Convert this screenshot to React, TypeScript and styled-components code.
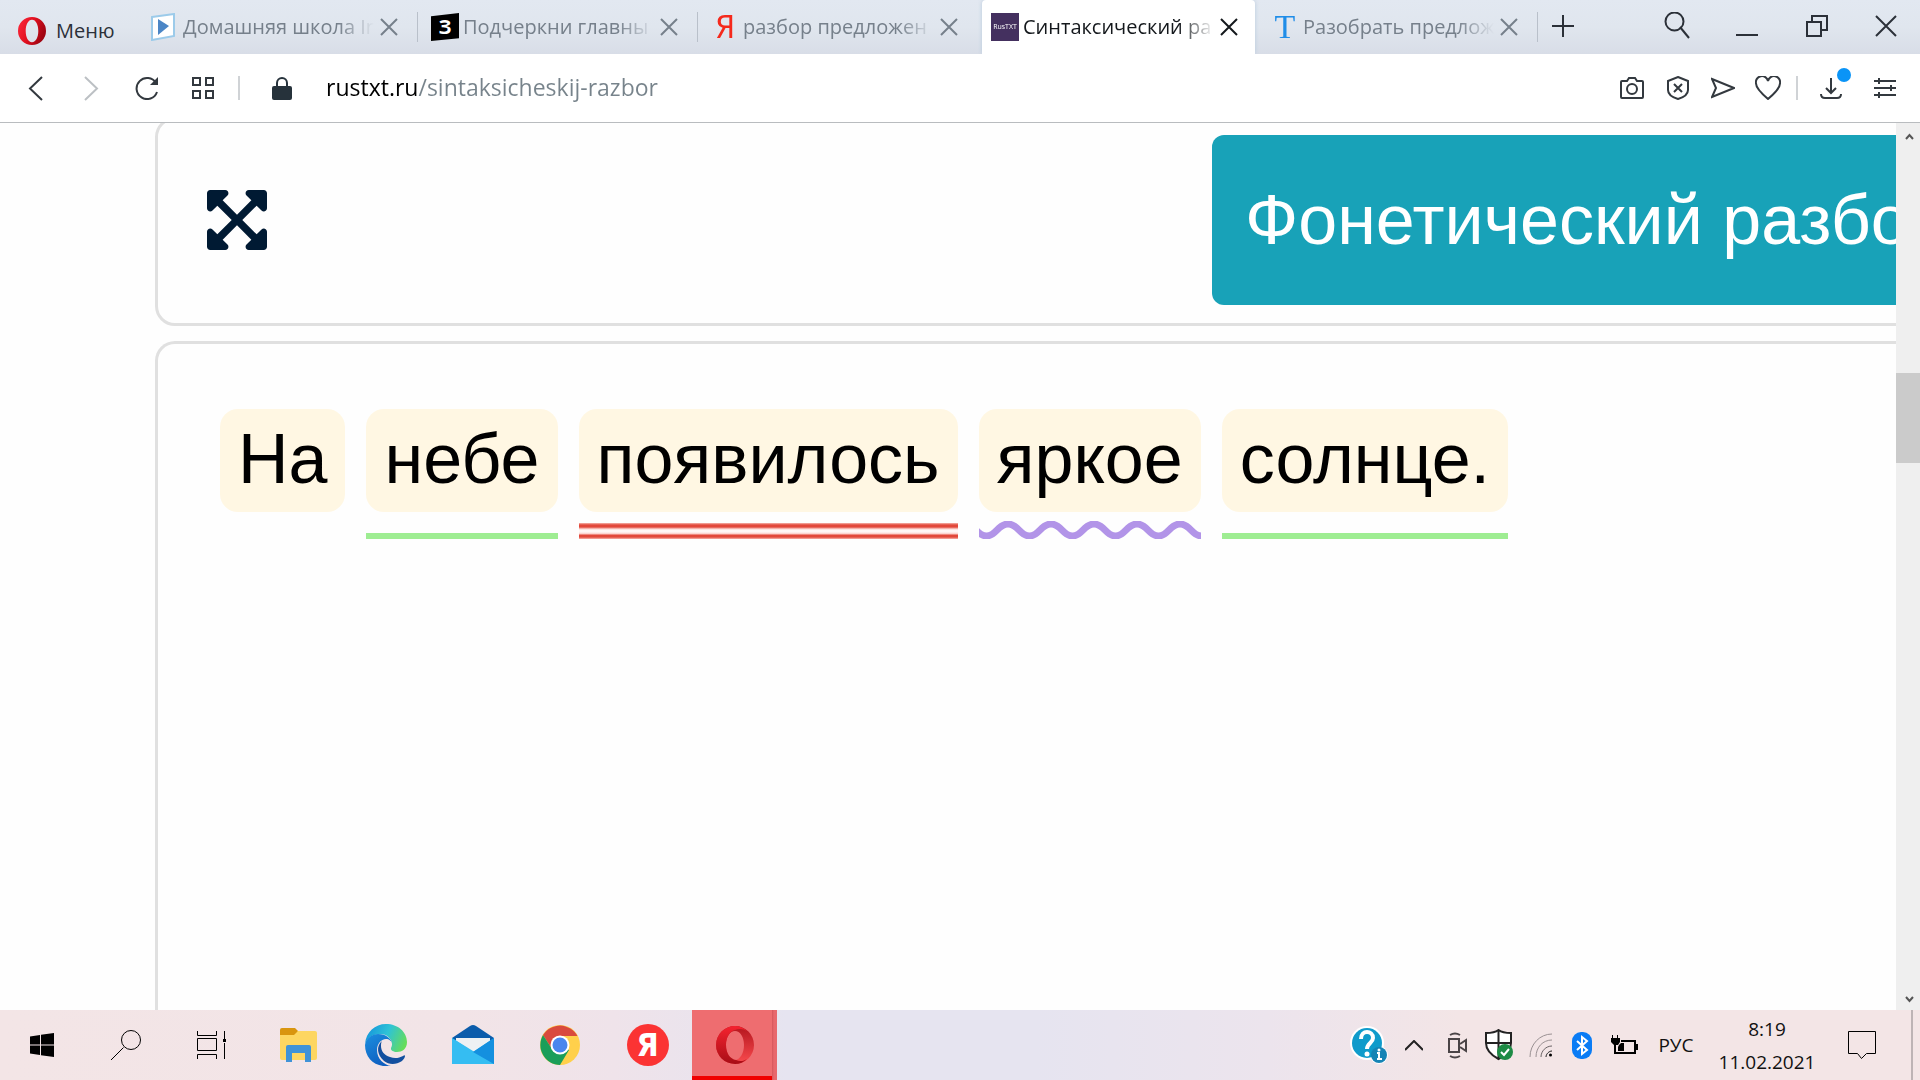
import React from "react";
import styled, { createGlobalStyle, css } from "styled-components";

const ui = `"Open Sans", "Noto Sans", sans-serif`;
const arial = `"Liberation Sans", Arial, sans-serif`;

const Global = createGlobalStyle`
  *, *::before, *::after { box-sizing: border-box; }
  body { margin: 0; background: #fff; font-family: ${ui}; overflow: hidden; }
  button, input { font: inherit; color: inherit; border: 0; background: none; padding: 0; margin: 0; }
  svg { display: block; flex: none; }
`;

const Screen = styled.div`
  height: 100vh;
  display: flex;
  flex-direction: column;
`;

/* ---------- tab strip ---------- */

const TabStrip = styled.header`
  flex: none;
  height: 54px;
  display: flex;
  background: linear-gradient(#e2e8f1, #e0e6ee 50%, #d8dde7);
  color: #2b3038;
`;

const MenuButton = styled.button`
  width: 137px;
  padding: 8px 0 0 18px;
  display: flex;
  align-items: center;
  gap: 10px;
  font-size: 20px;
  line-height: 28px;
`;

const TabList = styled.div`
  display: flex;
  min-width: 0;
`;

const Tab = styled.div<{ $active?: boolean; $line?: boolean }>`
  position: relative;
  width: 280px;
  padding: 0 13px 0 14px;
  display: flex;
  align-items: center;
  color: #76808b;
  ${(p) =>
    p.$line &&
    css`
      &::after {
        content: "";
        position: absolute;
        right: -1px;
        top: 12px;
        bottom: 12px;
        width: 1px;
        background: #b9c0ca;
      }
    `}
  ${(p) =>
    p.$active &&
    css`
      width: 273px;
      margin: 0 2px 0 5px;
      padding: 0 11px 0 9px;
      border-radius: 4px 4px 0 0;
      background: #fff;
      color: #14181c;
      box-shadow: 0 0 4px #b9cbdd;
      clip-path: inset(0 -4px 0 -4px);
    `}
`;

const TabTitle = styled.button`
  flex: 1;
  min-width: 0;
  height: 100%;
  display: flex;
  align-items: center;
  gap: 4px;
  overflow: hidden;
  color: inherit;
  font-size: 20px;
  line-height: 28px;
  white-space: nowrap;
  mask-image: linear-gradient(90deg, #000 calc(100% - 36px), transparent);
`;

const CloseButton = styled.button`
  flex: none;
  width: 30px;
  height: 30px;
  display: grid;
  place-items: center;
`;

const Favicon = styled.span<{ $bg?: string; $fg?: string; $size: number; $font?: string; $cut?: boolean }>`
  flex: none;
  width: 28px;
  height: 28px;
  display: grid;
  place-items: center;
  background: ${(p) => p.$bg || "transparent"};
  color: ${(p) => p.$fg || "#fff"};
  font-family: ${(p) => p.$font || ui};
  font-size: ${(p) => p.$size}px;
  line-height: 28px;
  clip-path: ${(p) => (p.$cut ? "polygon(0 12%, 100% 0, 100% 90%, 0 100%)" : "none")};
`;

const WindowTools = styled.div`
  flex: 1;
  display: flex;
  align-items: center;
  padding: 0 0 2px 11px;
`;

const ToolButton = styled.button<{ $w: number; $push?: boolean }>`
  width: ${(p) => p.$w}px;
  height: 40px;
  display: grid;
  place-items: center;
  margin-left: ${(p) => (p.$push ? "auto" : "0")};
`;

/* ---------- address bar ---------- */

const AddressBar = styled.nav`
  flex: none;
  height: 69px;
  display: flex;
  align-items: center;
  padding: 0 10px 0 12px;
  border-bottom: 1px solid #b9bcbf;
  background: #fff;
  color: #33393f;
`;

const Divider = styled.span<{ $gap: number }>`
  width: 2px;
  height: 24px;
  margin: 0 ${(p) => p.$gap}px;
  background: #d0d3d6;
`;

const Address = styled.input`
  && {
    flex: 1;
    min-width: 0;
    margin-left: 5px;
    height: 40px;
    padding-bottom: 2px;
    font-size: 23px;
    line-height: 32px;
    color: #77838b;
    outline: 0;
    background: linear-gradient(90deg, #000 91px, #77838b 91px);
    background-clip: text;
    -webkit-background-clip: text;
    -webkit-text-fill-color: transparent;
  }
`;

/* ---------- page ---------- */

const Viewport = styled.div`
  flex: 1;
  min-height: 0;
  display: flex;
`;

const Page = styled.main`
  flex: 1;
  min-width: 0;
  overflow: hidden;
  display: flex;
  flex-direction: column;
  padding-left: 155px;
  background: #fefefe;
  font-family: ${arial};
`;

const Card = styled.section<{ $grow?: boolean }>`
  flex: ${(p) => (p.$grow ? "1" : "none")};
  width: calc(100% + 140px);
  border: 3px solid #e0e0e0;
  border-radius: 20px;
`;

const ActionCard = styled(Card)`
  margin: -6px 0 15px;
  display: flex;
  align-items: center;
  justify-content: space-between;
  gap: 48px;
  padding: 15px 40px 18px 49px;
`;

const PhoneticButton = styled.button`
  flex: none;
  width: 781px;
  padding: 45px 33px;
  border-radius: 12px;
  background: #18a2b8;
  color: #fff;
  font-size: 70px;
  line-height: 80px;
  text-align: left;
  white-space: nowrap;
`;

const SentenceCard = styled(Card)`
  padding: 65px 62px 0;
  border-bottom: 0;
  border-radius: 20px 20px 0 0;
`;

const Sentence = styled.div`
  display: flex;
  gap: 21px;
`;

const Word = styled.div`
  display: flex;
  flex-direction: column;
  gap: 9px;
`;

const WordChip = styled.button`
  padding: 0 18px 3px;
  border-radius: 18px;
  background: #fff7e3;
  color: #000;
  font-size: 70px;
  line-height: 100px;
`;

type Role = "none" | "subject" | "predicate" | "attribute";

const Underline = styled.span<{ $role: Role }>`
  height: 18px;
  overflow: hidden;
  ${(p) => p.$role === "subject" && css`border-bottom: 6px solid #9eed92;`}
  ${(p) =>
    p.$role === "predicate" &&
    css`
      background: linear-gradient(
        transparent 2px, #f5b5ac 2px, #e2483a 4px, #e2483a 6px, #fbd5d0 8px,
        #fff6f5 9px, #fff6f5 11px, #fbc9c3 13px, #e2483a 14px, #e2483a 16px, #f5b5ac 18px
      );
    `}
`;

const WaveLine = styled.svg`
  width: 0;
  min-width: 100%;
  height: 18px;
`;

/* ---------- scrollbar ---------- */

const Scrollbar = styled.div`
  flex: none;
  width: 24px;
  display: grid;
  grid-template-rows: 26px 224px 90px 1fr 22px;
  justify-items: center;
  align-items: center;
  background: #efefef;
`;

const Thumb = styled.span`
  grid-row: 3;
  width: 100%;
  height: 100%;
  background: #cbcbcb;
`;

const ScrollArrow = styled.button<{ $row: number }>`
  grid-row: ${(p) => p.$row};
  padding-left: 3px;
`;

/* ---------- taskbar ---------- */

const Taskbar = styled.footer`
  flex: none;
  height: 70px;
  display: flex;
  background: linear-gradient(90deg, #f3e5e6, #f2e4e7 24%, #efe3ea 32%, #e6e4f0 41%, #e6e4f0 54%, #ece4ed 66%, #f3e5e6 76%);
  color: #111;
`;

const TaskButton = styled.button<{ $w: number; $running?: boolean }>`
  width: ${(p) => p.$w}px;
  display: grid;
  place-items: center;
  ${(p) =>
    p.$running &&
    css`
      && {
        background: linear-gradient(#f00000, #f00000) left bottom / 80px 4px no-repeat,
          linear-gradient(90deg, #ee6d70 80px, #d5565b 80px, #e8686d 82px);
      }
    `}
`;

const Tray = styled.div`
  margin-left: auto;
  display: flex;
  align-items: stretch;
`;

const Language = styled.button`
  width: 60px;
  font-size: 19px;
  line-height: 28px;
`;

const Clock = styled.button`
  width: 122px;
  display: flex;
  flex-direction: column;
  align-items: center;
  justify-content: center;
  padding-top: 2px;
  font-size: 19px;
  line-height: 33px;
`;

const DesktopEdge = styled.span`
  width: 9px;
  margin-left: 15px;
  border-left: 2px solid #bdb3b5;
`;

/* ---------- drawings ---------- */

type LineProps = { w: number; h: number; d: string; sw?: number; color?: string; children?: React.ReactNode };
const Line = ({ w, h, d, sw = 2, color = "currentColor", children }: LineProps) => (
  <svg width={w} height={h} viewBox={`0 0 ${w} ${h}`} fill="none" stroke={color} strokeWidth={sw} aria-hidden="true">
    <path d={d} />
    {children}
  </svg>
);

const OperaLogo = ({ size, id }: { size: number; id: string }) => (
  <svg width={size} height={size} viewBox="0 0 40 40" aria-hidden="true">
    <defs>
      <linearGradient id={id} x1="0" y1="0" x2="1" y2="0.4">
        <stop offset="0" stopColor="#ff2a3d" />
        <stop offset="0.55" stopColor="#e0101f" />
        <stop offset="1" stopColor="#a00512" />
      </linearGradient>
    </defs>
    <path fill={`url(#${id})`} fillRule="evenodd" d="M20 0a20 20 0 1 0 0 40 20 20 0 0 0 0-40zm0 4c5.500 0 9 7 9 16s-3.500 16-9 16-9-7-9-16 3.500-16 9-16z" />
  </svg>
);

const OperaTask = () => (
  <svg width="38" height="38" viewBox="0 0 38 38" aria-hidden="true">
    <defs>
      <linearGradient id="opTaskL" x1="0" y1="0" x2="0" y2="1">
        <stop offset="0" stopColor="#f5222f" />
        <stop offset="1" stopColor="#a80d16" />
      </linearGradient>
      <linearGradient id="opTaskR" x1="0" y1="0" x2="0" y2="1">
        <stop offset="0" stopColor="#b3151d" />
        <stop offset="1" stopColor="#fa4b4f" />
      </linearGradient>
    </defs>
    <path
      fill="url(#opTaskR)"
      fillRule="evenodd"
      d="M19 0a19 19 0 1 0 0 38 19 19 0 0 0 0-38zm0 5c5 0 9 6 9 14s-4 15-9 15-9-7-9-15 4-14 9-14z"
    />
    <path fill="url(#opTaskL)" d="M19 0a19 19 0 1 0 0 38c5 0 9-2 12-5-3 2-7 3-11 1-6-1-10-7-10-15S14 5 19 4c4-2 9-1 12 1-3-3-7-5-12-5z" />
  </svg>
);

const PlayFavicon = () => (
  <svg width="28" height="28" viewBox="0 0 28 28" aria-hidden="true">
    <path d="M1 4 23 1v22L1 27z" fill="#fff" stroke="#9ccbea" strokeWidth="2" />
    <path d="M7 6v16l11-9z" fill="#4b86c6" />
  </svg>
);

const Cross = ({ size = 18 }: { size?: number }) => (
  <Line w={size} h={size} sw={2} d={`M1 1 ${size - 1} ${size - 1}M${size - 1} 1 1 ${size - 1}`} />
);

const Lock = () => (
  <svg width="20" height="24" viewBox="0 0 20 24" aria-hidden="true">
    <path d="M5 11V7a5 5 0 0 1 10 0v4" fill="none" stroke="#26323b" strokeWidth="2" />
    <rect y="10" width="20" height="14" rx="2" fill="#26323b" />
  </svg>
);

const Expand = () => (
  <svg width="60" height="60" viewBox="0 32 448 448" aria-hidden="true">
    <path
      fill="#001a33"
      d="M448 344v112c0 13.300-10.700 24-24 24H312c-21.400 0-32.100-25.900-17-41l36.200-36.200L224 295.600 116.800 402.900 153 439c15.100 15.100 4.400 41-17 41H24c-13.300 0-24-10.700-24-24V344c0-21.400 25.900-32.100 41-17l36.200 36.200L184.500 256 77.200 148.700 41 185c-15.100 15.100-41 4.400-41-17V56c0-13.300 10.700-24 24-24h112c21.400 0 32.100 25.900 17 41l-36.200 36.200L224 216.400l107.200-107.300L295 73c-15.100-15.100-4.400-41 17-41h112c13.300 0 24 10.700 24 24v112c0 21.400-25.900 32.100-41 17l-36.200-36.200L263.500 256l107.200 107.300L407 327c15.100-15.100 41-4.400 41 17z"
    />
  </svg>
);

const Wave = () => (
  <WaveLine aria-hidden="true">
    <defs>
      <pattern id="wave" x="-14" width="43" height="18" patternUnits="userSpaceOnUse">
        <path d="M-22 15C-12 15-10 3 0 3S12 15 21.500 15 33 3 43 3 55 15 65 15" fill="none" stroke="#b294e8" strokeWidth="7" />
      </pattern>
    </defs>
    <rect width="100%" height="18" fill="url(#wave)" />
  </WaveLine>
);

const Windows = () => (
  <svg width="24" height="24" viewBox="0 0 24 24" aria-hidden="true">
    <path d="M0 3.500 10 2v9.500H0zM11 1.800 24 0v11.500H11zM0 12.500h10V22L0 20.500zM11 12.500h13V24l-13-1.800z" />
  </svg>
);

const TaskView = () => (
  <Line w={30} h={28} sw={1} color="#000" d="M1.500 0v4.500h19V0M1.500 28v-4.500h19V28M1.500 7.500h19v12h-19zM28.500 0v8M28.500 12v16">
    <rect x="27" y="8" width="3" height="3" fill="#000" stroke="none" />
  </Line>
);

const Folder = () => (
  <svg width="38" height="34" viewBox="0 0 38 34" aria-hidden="true">
    <path d="M1 2a2 2 0 0 1 2-2h13l3 3-2 6H1z" fill="#d9950f" />
    <path d="M1 7h14l4-4h17a2 2 0 0 1 2 2v25a2 2 0 0 1-2 2H3a2 2 0 0 1-2-2z" fill="#fdd661" />
    <path d="M7 34V19a2 2 0 0 1 2-2h21a2 2 0 0 1 2 2v15h-6v-9H13v9z" fill="#3f93d8" />
  </svg>
);

const Edge = () => (
  <svg width="42" height="42" viewBox="0 0 42 42" aria-hidden="true">
    <defs>
      <linearGradient id="edgeTop" x1="0" y1="0.3" x2="1" y2="0.6">
        <stop offset="0" stopColor="#1595dc" />
        <stop offset="0.5" stopColor="#2fc3d6" />
        <stop offset="1" stopColor="#66dd59" />
      </linearGradient>
      <linearGradient id="edgeSide" x1="0" y1="0" x2="0.5" y2="1">
        <stop offset="0" stopColor="#1b8fe0" />
        <stop offset="1" stopColor="#0f5fc0" />
      </linearGradient>
    </defs>
    <path d="M0 20C1 8 10 0 21 0c12 0 21 8 21 18 0 7-5 10-10 10-4 0-6-2-6-3 0-2 1-2 1-5 0-5-5-10-12-10C8 10 2 14 0 20z" fill="url(#edgeTop)" />
    <path d="M0 21c1-7 7-11 13-11 8 0 14 5 14 10 0-3-3-5-6-5-5 0-9 5-9 11 0 9 7 15 14 16C11 44 0 35 0 21z" fill="url(#edgeSide)" />
    <path d="M17 17c-6 5-5 14 2 20 5 4 12 4 18 0 2-2 3-4 3-5s-1-1-2 0c-4 2-8 3-13 1-6-2-9-6-9-11 0-2 0-3 1-5z" fill="#124f9f" />
  </svg>
);

const Mail = () => (
  <svg width="42" height="40" viewBox="0 0 42 40" aria-hidden="true">
    <path d="M0 13 18 1q3-2 6 0l18 12v10H0z" fill="#0b5cab" />
    <path d="M4 13h34v6L21 31 4 19z" fill="#eef1f3" />
    <path d="M0 13v26h42V13L21 27z" fill="#25a9ea" />
    <path d="M0 13 42 39H0z" fill="#35bdf2" />
    <path d="M42 13v26L21 27z" fill="#1490df" />
  </svg>
);

const Chrome = () => (
  <svg width="40" height="40" viewBox="0 0 40 40" aria-hidden="true">
    <circle cx="20" cy="20" r="20" fill="#ffd04b" />
    <path d="M20 20 12 24 3 10a20 20 0 0 1 34.500 1H20z" fill="#d94a3d" />
    <path d="M3 10a20 20 0 0 0 17 30l9-15-9-5-8 4z" fill="#1a9e59" />
    <circle cx="20" cy="20" r="9.500" fill="#fff" />
    <circle cx="20" cy="20" r="7.500" fill="#4a86ee" />
  </svg>
);

const Disc = styled.span`
  width: 42px;
  height: 42px;
  border-radius: 50%;
  background: #fb3333;
  color: #fff;
  font: 700 32px/42px "DejaVu Sans Condensed", "Liberation Sans", sans-serif;
  text-align: center;
`;

const Help = () => (
  <svg width="38" height="38" viewBox="0 0 38 38" aria-hidden="true">
    <circle cx="17" cy="17" r="17" fill="#fff" />
    <circle cx="29" cy="29" r="9" fill="#fff" />
    <circle cx="17" cy="17" r="15" fill="#0f9bcb" />
    <path d="M11 13c0-5 3-7 6-7s6 2 6 6c0 5-6 5-6 11" fill="none" stroke="#fff" strokeWidth="4" />
    <circle cx="17" cy="28" r="2.500" fill="#fff" />
    <circle cx="29" cy="29" r="8" fill="#1684b5" />
    <path d="M27 27h2v6m-2 0h5" fill="none" stroke="#fff" strokeWidth="2" />
    <circle cx="29" cy="24" r="1.500" fill="#fff" />
  </svg>
);

const Shield = () => (
  <svg width="28" height="32" viewBox="0 0 28 32" aria-hidden="true">
    <path d="M13.500 1c4 3 8 3 12.500 3v10c0 7-5 12-12.500 16C6 26 1 21 1 14V4c4 0 8.500 0 12.500-3z" fill="#fff" stroke="#222" strokeWidth="2" />
    <path d="M13.500 1v29M1 14h25" stroke="#222" strokeWidth="2" />
    <circle cx="20" cy="23" r="8" fill="#1d8b45" />
    <path d="m16 23 3 3 5-6" fill="none" stroke="#fff" strokeWidth="2" />
  </svg>
);

const Wifi = () => (
  <svg width="24" height="24" viewBox="0 0 24 24" fill="none" aria-hidden="true">
    <path d="M1 24C1 11 11 1 23 1M7 24C7 14 14 7 23 7" stroke="#9a9193" />
    <path d="M12 24c0-6 5-11 11-11" stroke="#6b6466" />
    <path d="M17 24c0-3 3-6 6-6" stroke="#222" strokeWidth="1" />
    <circle cx="21.500" cy="22" r="1.500" fill="#000" />
  </svg>
);

const Bluetooth = () => (
  <svg width="20" height="27" viewBox="0 0 20 27" aria-hidden="true">
    <rect width="20" height="27" rx="9" fill="#0a7cf5" />
    <path d="m5 9 10 9-5 4V5l5 4-10 9" fill="none" stroke="#fff" strokeWidth="2" />
  </svg>
);

const Battery = () => (
  <svg width="28" height="20" viewBox="0 0 28 20" aria-hidden="true">
    <path d="M11 6h14v12H5" fill="none" stroke="#000" strokeWidth="2" />
    <path d="M9 10l2-2h3v8H8v-4zM26 9h2v6h-2zM2 0h1v3h4V0h1v3h2v4l-2 3H6v9H4v-9L1 7V3h1z" />
  </svg>
);

const tabs = [
  { title: "Домашняя школа In", icon: <PlayFavicon />, line: true },
  { title: "Подчеркни главны", icon: <Favicon $bg="#000" $size={20} $cut><b>З</b></Favicon>, line: true },
  { title: "разбор предложен", icon: <Favicon $fg="#f5291c" $size={32} $font={`"DejaVu Sans Condensed", ${arial}`}>Я</Favicon> },
  { title: "Синтаксический ра", icon: <Favicon $bg="#44305f" $size={7}>RusTXT</Favicon>, active: true },
  { title: "Разобрать предлож", icon: <Favicon $fg="#1f8de8" $size={34} $font={`"Liberation Serif", serif`}>Т</Favicon>, line: true },
];

const words: { text: string; role: Role }[] = [
  { text: "На", role: "none" },
  { text: "небе", role: "subject" },
  { text: "появилось", role: "predicate" },
  { text: "яркое", role: "attribute" },
  { text: "солнце.", role: "subject" },
];

export default function App() {
  return (
    <Screen>
      <Global />
      <TabStrip>
        <MenuButton>
          <OperaLogo size={28} id="operaMenu" />
          Меню
        </MenuButton>
        <TabList>
          {tabs.map((t) => (
            <Tab key={t.title} $active={t.active} $line={t.line}>
              <TabTitle>
                {t.icon}
                {t.title}
              </TabTitle>
              <CloseButton aria-label="Закрыть вкладку">
                <Cross />
              </CloseButton>
            </Tab>
          ))}
        </TabList>
        <WindowTools>
          <ToolButton $w={30} aria-label="Новая вкладка">
            <Line w={22} h={22} d="M11 0v22M0 11h22" />
          </ToolButton>
          <ToolButton $w={70} $push aria-label="Поиск вкладок">
            <Line w={26} h={28} d="M16 15 25 26">
              <circle cx="10.500" cy="9.500" r="9" />
            </Line>
          </ToolButton>
          <ToolButton $w={70} aria-label="Свернуть">
            <Line w={22} h={22} d="M0 20h22" />
          </ToolButton>
          <ToolButton $w={70} aria-label="Восстановить">
            <Line w={22} h={22} d="M1 7h14v14H1zM6 7V1h15v14h-6" />
          </ToolButton>
          <ToolButton $w={68} aria-label="Закрыть">
            <Cross size={22} />
          </ToolButton>
        </WindowTools>
      </TabStrip>

      <AddressBar>
        <ToolButton $w={46} aria-label="Назад">
          <Line w={15} h={25} d="M14 1 2 12.500 14 24" />
        </ToolButton>
        <ToolButton $w={66} aria-label="Вперёд">
          <Line w={15} h={25} color="#bcc0c4" d="M1 1 13 12.500 1 24" />
        </ToolButton>
        <ToolButton $w={46} aria-label="Обновить">
          <Line w={24} h={24} d="M21 7A10.500 10.500 0 1 0 22 16">
            <path d="M23 1v8h-8z" fill="currentColor" stroke="none" />
          </Line>
        </ToolButton>
        <ToolButton $w={66} aria-label="Экспресс-панель">
          <Line w={24} h={22} d="M2 1h7v7H2zM15 1h7v7h-7zM2 14h7v7H2zM15 14h7v7h-7z" />
        </ToolButton>
        <Divider $gap={2} />
        <ToolButton $w={79} aria-label="Сведения о сайте">
          <Lock />
        </ToolButton>
        <Address aria-label="Адрес" defaultValue="rustxt.ru/sintaksicheskij-razbor" spellCheck={false} />
        <ToolButton $w={46} aria-label="Снимок">
          <Line w={24} h={22} d="M2 4h5l2-3h6l2 3h5q1 0 1 1v15q0 1-1 1H2q-1 0-1-1V5q0-1 1-1z">
            <circle cx="12" cy="12" r="5" />
          </Line>
        </ToolButton>
        <ToolButton $w={45} aria-label="Блокировка рекламы">
          <Line w={24} h={24} d="M12 1 22 5v9q0 6-10 9Q2 20 2 14V5zM8 8l8 8M16 8l-8 8" />
        </ToolButton>
        <ToolButton $w={46} aria-label="Мой поток">
          <Line w={24} h={22} d="M1 2 23 11 1 20 5 11z" />
        </ToolButton>
        <ToolButton $w={44} aria-label="Закладки">
          <Line w={26} h={24} d="M13 23C6 17 1 12 1 7.500A6 6 0 0 1 13 5a6 6 0 0 1 12 2.500C25 12 20 17 13 23z" />
        </ToolButton>
        <Divider $gap={6} />
        <ToolButton $w={56} aria-label="Загрузки">
          <Line w={38} h={40} d="M18 10v15M13 20l5 5 5-5M8 26q0 4 4 4h12q4 0 4-4">
            <circle cx="31" cy="7" r="7" fill="#0a94f7" stroke="none" />
          </Line>
        </ToolButton>
        <ToolButton $w={50} aria-label="Настройки">
          <Line w={22} h={20} d="M0 3h22M0 10h22M0 17h22M5 0v6M17 7v6M5 14v6" />
        </ToolButton>
      </AddressBar>

      <Viewport>
        <Page>
          <ActionCard>
            <button aria-label="На весь экран">
              <Expand />
            </button>
            <PhoneticButton>Фонетический разбор</PhoneticButton>
          </ActionCard>
          <SentenceCard $grow>
            <Sentence>
              {words.map((w) => (
                <Word key={w.text}>
                  <WordChip>{w.text}</WordChip>
                  <Underline $role={w.role}>{w.role === "attribute" && <Wave />}</Underline>
                </Word>
              ))}
            </Sentence>
          </SentenceCard>
        </Page>
        <Scrollbar>
          <ScrollArrow $row={1} aria-label="Вверх">
            <Line w={9} h={7} d="M1 6 4.500 2 8 6" color="#555" />
          </ScrollArrow>
          <Thumb />
          <ScrollArrow $row={5} aria-label="Вниз">
            <Line w={9} h={7} d="M1 1 4.500 5 8 1" color="#555" />
          </ScrollArrow>
        </Scrollbar>
      </Viewport>

      <Taskbar>
        <TaskButton $w={84} aria-label="Пуск"><Windows /></TaskButton>
        <TaskButton $w={83} aria-label="Поиск">
          <Line w={30} h={30} sw={1} color="#000" d="M12.500 17.500 0 30">
            <circle cx="20" cy="10" r="9.500" />
          </Line>
        </TaskButton>
        <TaskButton $w={87} aria-label="Представление задач"><TaskView /></TaskButton>
        <TaskButton $w={88} aria-label="Проводник"><Folder /></TaskButton>
        <TaskButton $w={87} aria-label="Edge"><Edge /></TaskButton>
        <TaskButton $w={87} aria-label="Почта"><Mail /></TaskButton>
        <TaskButton $w={87} aria-label="Chrome"><Chrome /></TaskButton>
        <TaskButton $w={89} aria-label="Яндекс"><Disc>Я</Disc></TaskButton>
        <TaskButton $w={85} $running aria-label="Opera"><OperaTask /></TaskButton>
        <Tray>
          <TaskButton $w={46} aria-label="Справка"><Help /></TaskButton>
          <TaskButton $w={44} aria-label="Скрытые значки">
            <Line w={18} h={11} d="M0 10 9 1l9 9" color="#222" />
          </TaskButton>
          <TaskButton $w={42} aria-label="Собрание">
            <Line w={20} h={27} color="#4a4446" d="M2 7h10v13H2zM13 12l6-4v11l-6-4M3 3q5-3 10 0M3 24q5 3 10 0" />
          </TaskButton>
          <TaskButton $w={42} aria-label="Безопасность"><Shield /></TaskButton>
          <TaskButton $w={42} aria-label="Сеть"><Wifi /></TaskButton>
          <TaskButton $w={40} aria-label="Bluetooth"><Bluetooth /></TaskButton>
          <TaskButton $w={44} aria-label="Батарея"><Battery /></TaskButton>
          <Language>РУС</Language>
          <Clock>
            <span>8:19</span>
            <span>11.02.2021</span>
          </Clock>
          <TaskButton $w={68} aria-label="Уведомления">
            <Line w={30} h={28} sw={1} color="#000" d="M1.500.5h27v22h-9l-5 5-4-5h-9z" />
          </TaskButton>
          <DesktopEdge />
        </Tray>
      </Taskbar>
    </Screen>
  );
}
